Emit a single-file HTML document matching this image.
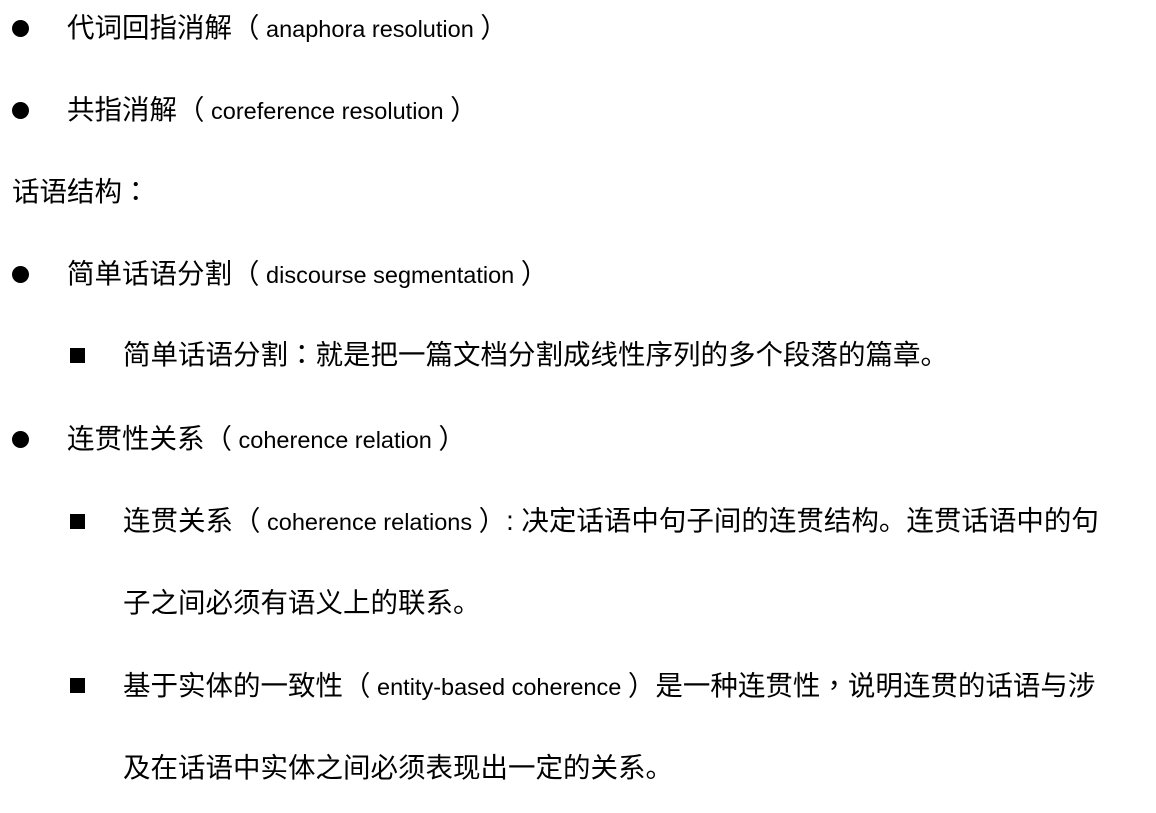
<!DOCTYPE html>
<html><head><meta charset="utf-8"><style>
html,body{margin:0;padding:0;background:#fff;width:1156px;height:813px;overflow:hidden}
body{font-family:"Liberation Sans","Noto Sans CJK SC",sans-serif;color:#000;font-size:27.5px;position:relative}
.l{position:absolute;height:40px;line-height:40px;white-space:nowrap}
.e{font-size:23.5px}
.p{font-family:"Noto Sans CJK TC",sans-serif}
.dot{position:absolute;width:17px;height:17px;border-radius:50%;background:#000}
.sq{position:absolute;width:15px;height:15px;background:#000}
</style></head><body>
<div class="dot" style="left:12px;top:20px"></div>
<div class="l" style="left:67px;top:8px">代词回指消解（<span class="e"> anaphora resolution </span>）</div>
<div class="dot" style="left:12px;top:102px"></div>
<div class="l" style="left:67px;top:90px">共指消解（<span class="e"> coreference resolution </span>）</div>
<div class="l" style="left:12px;top:169px">话语结构<span class="p">：</span></div>
<div class="dot" style="left:12px;top:266px"></div>
<div class="l" style="left:67px;top:254px">简单话语分割（<span class="e"> discourse segmentation </span>）</div>
<div class="sq" style="left:70px;top:348px"></div>
<div class="l" style="left:123px;top:332px">简单话语分割<span class="p">：</span>就是把一篇文档分割成线性序列的多个段落的篇章。</div>
<div class="dot" style="left:12px;top:431px"></div>
<div class="l" style="left:67px;top:419px">连贯性关系（<span class="e"> coherence relation </span>）</div>
<div class="sq" style="left:70px;top:514px"></div>
<div class="l" style="left:123px;top:501px">连贯关系（<span class="e"> coherence relations </span>）: 决定话语中句子间的连贯结构。连贯话语中的句</div>
<div class="l" style="left:123px;top:583px">子之间必须有语义上的联系。</div>
<div class="sq" style="left:70px;top:678px"></div>
<div class="l" style="left:123px;top:663px">基于实体的一致性（<span class="e"> entity-based coherence </span>）是一种连贯性<span class="p">，</span>说明连贯的话语与涉</div>
<div class="l" style="left:123px;top:748px">及在话语中实体之间必须表现出一定的关系。</div>
</body></html>
